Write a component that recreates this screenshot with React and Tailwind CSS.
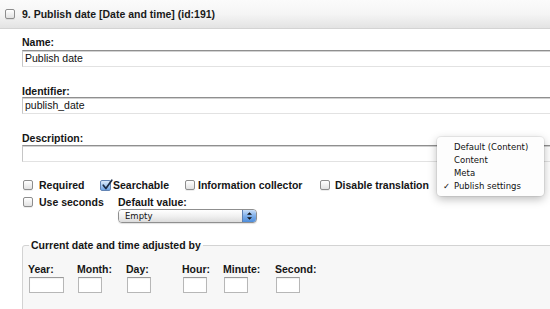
import React from "react";

const label = "block text-[10.5px] leading-[12px] font-bold text-[#151515]";

function CheckBox({ checked = false }) {
  if (checked) {
    return (
      <span className="relative block w-[11px] h-[11px] shrink-0 rounded-[2px] border border-[#6384b4] bg-linear-to-b from-[#dbe9fa] via-[#a9cbf1] to-[#6ea3e4]">
        <svg viewBox="0 0 12 12" className="absolute left-[0px] top-[-2px] w-[12px] h-[12px]">
          <path d="M2.3 6.2 L4.9 9.6 L10.8 1.2" fill="none" stroke="#1c2b45" strokeWidth="1.7" strokeLinecap="round" strokeLinejoin="round" />
        </svg>
      </span>
    );
  }
  return (
    <span className="block w-[10px] h-[10px] shrink-0 rounded-[2px] border border-[#8d8d8d] bg-linear-to-b from-white to-[#e2e2e2] shadow-[0_1px_0_rgba(0,0,0,0.07)]" />
  );
}

function TextField({ value, className = "" }) {
  return (
    <div
      className={`h-[17px] w-[560px] border border-[#c6c6c6] border-t-[#8f8f8f] border-b-[#e2e2e2] bg-white shadow-[inset_0_1px_0_#d2d2d2] pl-[2px] text-[10.5px] leading-[15px] text-[#111] ${className}`}
    >
      {value}
    </div>
  );
}

function SmallField({ wide = false }) {
  return (
    <div
      className={`mt-[2px] ml-[1px] h-[16px] border border-[#b7b7b7] border-t-[#9a9a9a] bg-white shadow-[inset_0_1px_1px_rgba(0,0,0,0.06)] ${
        wide ? "w-[35px]" : "w-[24px]"
      }`}
    />
  );
}

function Option({ children, checked = false }) {
  return (
    <div className="relative h-[13px] pl-[17px] leading-[13px]">
      {checked && <span className="absolute left-[6px] top-0">✓</span>}
      {children}
    </div>
  );
}

export default function App() {
  return (
    <div className="relative w-[550px] h-[309px] overflow-hidden bg-white font-['Liberation_Sans',Arial,sans-serif] text-[#151515]">
      <div className="flex h-[29px] items-center gap-[7px] border-b border-[#d3d3d3] bg-linear-to-b from-[#fbfbfb] via-[#f5f5f5] to-[#e3e3e3] pl-[5px]">
        <CheckBox />
        <span className="text-[10.5px] font-bold leading-[12px] text-[#1a1a1a]">
          9. Publish date [Date and time] (id:191)
        </span>
      </div>

      <div className="pl-[22px]">
        <span className={`${label} mt-[7px]`}>Name:</span>
        <TextField className="mt-[2px]" value="Publish date" />

        <span className={`${label} mt-[18px]`}>Identifier:</span>
        <TextField value="publish_date" />

        <span className={`${label} mt-[18px]`}>Description:</span>
        <TextField className="mt-[1px]" value="" />

        <div className="mt-[17px] flex h-[12px] items-center text-[10.5px] font-bold leading-[12px]">
          <div className="flex w-[78px] items-center">
            <span className="ml-[1px]">
              <CheckBox />
            </span>
            <span className="ml-[6px]">Required</span>
          </div>
          <div className="flex w-[85px] items-center">
            <CheckBox checked />
            <span className="ml-[2px]">Searchable</span>
          </div>
          <div className="flex w-[134px] items-center">
            <CheckBox />
            <span className="ml-[3px]">Information collector</span>
          </div>
          <div className="flex items-center">
            <span className="ml-[1px]">
              <CheckBox />
            </span>
            <span className="ml-[5px]">Disable translation</span>
          </div>
        </div>

        <div className="mt-[5px] flex items-start text-[10.5px] font-bold leading-[12px]">
          <div className="flex h-[12px] w-[96px] items-center">
            <span className="ml-[1px]">
              <CheckBox />
            </span>
            <span className="ml-[6px]">Use seconds</span>
          </div>
          <div className="flex flex-col">
            <span>Default value:</span>
            <div className="mt-[1px] flex h-[14px] w-[139px] overflow-hidden rounded-[4px] border border-[#8f8f8f] shadow-[0_1px_1px_rgba(0,0,0,0.12)]">
              <div className="flex-1 bg-linear-to-b from-white via-[#f1f1f1] to-[#dcdcdc] pl-[6px] font-['DejaVu_Sans',sans-serif] text-[8.5px] font-normal leading-[12px] text-[#111]">
                Empty
              </div>
              <div className="flex w-[14px] flex-col items-center justify-center gap-[2px] border-l border-[#5c7fb2] bg-linear-to-b from-[#c9def8] via-[#7eaee9] to-[#4d8ddc]">
                <svg viewBox="0 0 6 3" className="w-[5px] h-[3px]">
                  <path d="M0 3 L3 0 L6 3 Z" fill="#111" />
                </svg>
                <svg viewBox="0 0 6 3" className="w-[5px] h-[3px]">
                  <path d="M0 0 L6 0 L3 3 Z" fill="#111" />
                </svg>
              </div>
            </div>
          </div>
        </div>

        <fieldset className="mt-[16px] w-[545px] rounded-tl-[3px] border border-[#d3d3d3] bg-[#f7f7f7] pl-[5px] pb-[20px]">
          <legend className="ml-[1px] px-[2px] text-[10.5px] font-bold leading-[12px]">
            Current date and time adjusted by
          </legend>
          <div className="mt-[12px] flex text-[10.5px] font-bold leading-[12px]">
            <div className="w-[49px]">
              <span>Year:</span>
              <SmallField wide />
            </div>
            <div className="w-[49px]">
              <span>Month:</span>
              <SmallField />
            </div>
            <div className="w-[56px]">
              <span>Day:</span>
              <SmallField />
            </div>
            <div className="w-[41px]">
              <span>Hour:</span>
              <SmallField />
            </div>
            <div className="w-[52px]">
              <span>Minute:</span>
              <SmallField />
            </div>
            <div>
              <span>Second:</span>
              <SmallField />
            </div>
          </div>
        </fieldset>
      </div>

      <div className="absolute left-[437px] top-[137px] h-[59px] w-[107px] rounded-[4px] bg-[#fdfdfd] pt-[4px] font-['DejaVu_Sans',sans-serif] text-[8.5px] text-[#111] shadow-[0_3px_10px_rgba(0,0,0,0.28),0_0_0_1px_rgba(0,0,0,0.06)]">
        <Option>Default (Content)</Option>
        <Option>Content</Option>
        <Option>Meta</Option>
        <Option checked>Publish settings</Option>
      </div>
    </div>
  );
}
